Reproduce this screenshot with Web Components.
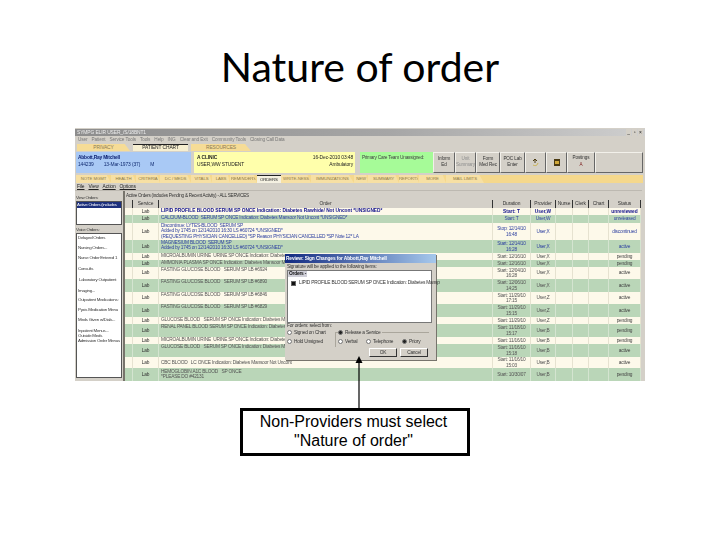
<!DOCTYPE html>
<html>
<head>
<meta charset="utf-8">
<title>Nature of order</title>
<style>
  html, body { margin: 0; background: #fff; }
</style>
</head>
<body>
<slide-page>
  <span slot="title">Nature of order</span>
  <ehr-window slot="shot">
    <left-panel slot="left"></left-panel>
    <orders-table slot="table"></orders-table>
    <review-dialog slot="dialog"></review-dialog>
  </ehr-window>
  <span slot="note">Non-Providers must select<br>"Nature of order"</span>
</slide-page>

<script>
const ROWS = [
  { h: 7, kind: "new", order: ["LIPID PROFILE BLOOD SERUM SP ONCE Indication: Diabetes Rawhide/ Not Uncont *UNSIGNED*"], dur: "Start: T", prov: "User,W", status: "unreviewed" },
  { h: 8, kind: "blue", order: ["CALCIUM-BLOOD  SERUM SP ONCE Indication: Diabetes Mansoor Not Uncont *UNSIGNED*"], dur: "Start: T", prov: "User,W", status: "unreleased" },
  { h: 17, kind: "blue", order: ["Discontinue: LYTES-BLOOD  SERUM SP", "Added by 1745 on 12/14/2010 16:30 LS #60724 *UNSIGNED*", "(REQUESTING PHYSICIAN CANCELLED) *SP Reason PHYSICIAN CANCELLED *SP Note 12* LA"], dur: "Stop: 12/14/10 16:48", prov: "User,X", status: "discontinued" },
  { h: 13, kind: "blue", order: ["MAGNESIUM BLOOD  SERUM SP", "Added by 1745 on 12/14/2010 16:30 LS #60724 *UNSIGNED*"], dur: "Start: 12/14/10 16:28", prov: "User,X", status: "active" },
  { h: 7, order: ["MICROALBUMIN URINE  URINE SP ONCE Indication: Diabetes"], dur: "Start: 12/16/10", prov: "User,X", status: "pending" },
  { h: 7, order: ["AMMONIA PLASMA SP ONCE Indication: Diabetes Mansoor Me"], dur: "Start: 12/16/10", prov: "User,X", status: "pending" },
  { h: 12, order: ["FASTING GLUCOSE BLOOD   SERUM SP LB #6924"], dur: "Start: 12/04/10 16:28", prov: "User,X", status: "active" },
  { h: 13, order: ["FASTING GLUCOSE BLOOD   SERUM SP LB #6890"], dur: "Start: 12/06/10 14:25", prov: "User,X", status: "active" },
  { h: 12, order: ["FASTING GLUCOSE BLOOD   SERUM SP LB #6846"], dur: "Start: 11/29/10 17:15", prov: "User,Z", status: "active" },
  { h: 13, order: ["FASTING GLUCOSE BLOOD   SERUM SP LB #6829"], dur: "Start: 11/29/10 15:15", prov: "User,Z", status: "active" },
  { h: 7, order: ["GLUCOSE BLOOD   SERUM SP ONCE Indication: Diabetes Mel"], dur: "Start: 11/29/10", prov: "User,Z", status: "pending" },
  { h: 13, order: ["RENAL PANEL BLOOD SERUM SP ONCE Indication: Diabetes"], dur: "Start: 11/18/10 15:17", prov: "User,B", status: "pending" },
  { h: 7, order: ["MICROALBUMIN URINE  URINE SP ONCE Indication: Diabetes"], dur: "Start: 11/16/10", prov: "User,B", status: "pending" },
  { h: 13, order: ["GLUCOSE BLOOD   SERUM SP ONCE Indication: Diabetes Man"], dur: "Start: 11/16/10 15:18", prov: "User,B", status: "active" },
  { h: 11, pad: 3, order: ["CBC BLOOD   LC ONCE Indication: Diabetes Mansoor Not Uncont"], dur: "Start: 11/16/10 15:03", prov: "User,B", status: "active" },
  { h: 13, pad: 1, order: ["HEMOGLOBIN A1C BLOOD   SP ONCE", "*PLEASE DO #42131"], dur: "Start: 10/30/07", prov: "User,B", status: "pending" }
];

const COLS = "8px 26px 334px 38px 25px 17px 16px 20px 32px";

function define(name, html) {
  customElements.define(name, class extends HTMLElement {
    constructor() {
      super();
      this.attachShadow({ mode: "open" }).innerHTML = html;
    }
  });
}

define("slide-page", `
  <style>
    :host { display: block; width: 720px; height: 540px; position: relative; overflow: hidden;
      font-family: "Liberation Sans", sans-serif; color: #000; }
    h1 { margin: 0; padding-top: 41px; height: 87px; text-align: center; font: 400 41px/52px Lato, sans-serif; }
    .shot { margin-left: 75px; width: 570px; }
    .note { box-sizing: border-box; margin: 27px 0 0 240px; width: 230px; height: 48px; border: 3px solid #000;
      text-align: center; font-size: 16px; line-height: 19px; padding: 1px 3px 0 0; }
    .arrow { position: absolute; left: 351px; top: 356px; }
  </style>
  <h1><slot name="title"></slot></h1>
  <div class="shot"><slot name="shot"></slot></div>
  <div class="note"><slot name="note"></slot></div>
  <svg class="arrow" width="16" height="52" viewBox="0 0 16 52">
    <path d="M8 6V52" stroke="#000" stroke-width="1.2" fill="none"/>
    <path d="M8 0L11.5 7H4.5Z" fill="#000"/>
  </svg>
`);

define("ehr-window", `
  <style>
    :host { display: block; position: relative; width: 570px; height: 253px; overflow: hidden; background: #d4d0c8;
      font: 4.9px/7px "Liberation Sans", sans-serif; letter-spacing: -.1px; color: #333; }
    .wrap { filter: blur(.3px); height: 100%; }
    .title { height: 7px; margin-top: 1px; background: linear-gradient(90deg, #8d8d8d, #a6a6a6 55%, #cfcfcf); color: #eee;
      display: flex; justify-content: space-between; padding: 0 2px; line-height: 7px; }
    .ctl { display: flex; gap: 1px; }
    .ctl i { font-style: normal; width: 5px; text-align: center; color: #222; background: #d4d0c8; }
    .menu { height: 8px; display: flex; gap: 4px; padding-left: 3px; line-height: 8px; color: #777; font-size: 4.7px; }
    .tabs { height: 8px; display: grid; grid-template-columns: 53px 55px 60px; gap: 3px; padding-left: 2px; line-height: 7px; }
    .tabs span { height: 7px; background: #f6dc96; color: #8b7b55; text-align: center; clip-path: polygon(0 0, 90% 0, 100% 100%, 0 100%); }
    .tabs b { font-weight: 400; height: 7px; color: #222; background: #f7efd0; border-top: 1px solid #222; box-sizing: border-box; text-align: center; line-height: 6px; }
    .banner { display: grid; grid-template-columns: 115px 164px 78px 22px 21px 24px 25px 21px 21px 28px 48px; height: 21px; padding-left: 1px; }
    .pt { background: #a9c9f5; color: #102a70; padding: 2px 1px 0 2px; }
    .pt b { display: block; color: #0a1e70; letter-spacing: -.2px; }
    .pt span { display: flex; gap: 10px; }
    .cl { margin-left: 3px; background: #ffffab; color: #222; padding: 2px 2px 0 3px; display: flex; justify-content: space-between; }
    .cl b { display: block; }
    .cl div:last-child { text-align: right; }
    .tm { margin-left: 5px; background: #a6fb98; color: #444; padding: 2px; white-space: nowrap; letter-spacing: -.25px; font-size: 4.8px; }
    .bn { border: 1px solid; border-color: #f2f0ea #666 #666 #f2f0ea; text-align: center; padding-top: 3px; line-height: 6px; color: #333; min-width: 0; overflow: hidden; font-size: 4.6px; white-space: nowrap; }
    .bn.off { color: #8d8d8d; }
    .bn svg { display: block; margin: 2px auto 0; }
    .sub { margin: 2px 2px 0 1px; height: 8px; background: #f5d88c; display: grid;
      grid-template-columns: 35px 25px 24px 31px 21px 18px 27px 24px 30px 43px 14px 31px 20px 27px 38px; line-height: 8px; color: #8d7a48; font-size: 4.3px; }
    .sub span { text-align: center; clip-path: polygon(0 0, 88% 0, 100% 100%, 0 100%); background: #f7e0a4; white-space: nowrap; }
    .sub b { font-weight: 400; text-align: center; background: #f5f1e2; color: #222; border-top: 1px solid #222; box-sizing: border-box; line-height: 7px; }
    .omenu { height: 8px; display: flex; gap: 4px; padding-left: 2px; color: #222; line-height: 7px; border-bottom: 1px solid #bdb9b1; box-sizing: border-box; text-decoration: underline; margin-right: 3px; }
    .body { display: flex; }
  </style>
  <div class="wrap">
    <div class="title"><span>SYMPG ELIR USER_/S/18BNT1</span><span class="ctl"><i>_</i><i>▫</i><i>×</i></span></div>
    <div class="menu"><span>User</span><span>Patient</span><span>Service Tools</span><span>Tools</span><span>Help</span><span>ING</span><span>Clear and Exit</span><span>Community Tools</span><span>Closing Call Data</span></div>
    <div class="tabs"><span>PRIVACY</span><b>PATIENT CHART</b><span>RESOURCES</span></div>
    <div class="banner">
      <div class="pt"><b>Abbott,Ray Mitchell</b><span><span>144239</span><span>13-Mar-1973 (37)</span><span>M</span></span></div>
      <div class="cl"><div><b>A CLINIC</b>USER,WW STUDENT</div><div>16-Dec-2010 03:48<br>Ambulatory</div></div>
      <div class="tm">Primary Care Team Unassigned:</div>
      <div class="bn">Inform<br>Ed</div>
      <div class="bn off">Unit<br>Summary</div>
      <div class="bn">Form<br>Med Rec</div>
      <div class="bn">POC Lab<br>Enter</div>
      <div class="bn"><svg width="9" height="9" viewBox="0 0 9 9"><path d="M2 3L4 1L6 3M4 1V5" stroke="#4a3a10" fill="none"/><path d="M2 7c2 1 4 1 5-2" stroke="#c9b04a" fill="none"/></svg></div>
      <div class="bn"><svg width="8" height="9" viewBox="0 0 8 9"><rect x="1" y="1" width="6" height="7" fill="#4b3a12"/><rect x="2" y="3" width="4" height="3" fill="#d0a83a"/></svg></div>
      <div class="bn" style="padding-top:1px;line-height:7px">Postings<br><span style="color:#7a1a1a">A</span></div>
      <div class="bn"></div>
    </div>
    <div class="sub"><span>NOTE MGMT</span><span>HEALTH</span><span>CRITERIA</span><span>DC / MEDS</span><span>VITALS</span><span>LABS</span><span>REMINDERS</span><b>ORDERS</b><span>WRITE-NESS</span><span>IMMUNIZATIONS</span><span>NEW</span><span>SUMMARY</span><span>REPORTS</span><span>MORE</span><span>MAIL LIMITS</span></div>
    <div class="omenu"><span>File</span><span>View</span><span>Action</span><span>Options</span></div>
    <div class="body"><slot name="left"></slot><slot name="table"></slot></div>
  </div>
  <slot name="dialog"></slot>
`);

define("left-panel", `
  <style>
    :host { display: block; width: 48px; color: #333; font-size: 4.4px; letter-spacing: -.25px; flex: none; }
    .lab { height: 10px; line-height: 5px; padding: 4px 0 0 1px; box-sizing: border-box; }
    .sel { margin-left: 1px; width: 46px; height: 24px; background: #fff; border: 1px solid #555; box-sizing: border-box; }
    .sel div { background: #1c2f7d; color: #fff; white-space: nowrap; line-height: 6px; }
    .list { margin-left: 1px; width: 46px; height: 145px; background: #fff; border: 1px solid #555; box-sizing: border-box; padding-top: 1px; line-height: 5px; }
    .list div { white-space: nowrap; padding-left: 1px; }
  </style>
  <div class="lab">View Orders:</div>
  <div class="sel"><div>Active Orders (includes</div></div>
  <div class="lab" style="height:8px;padding-top:2px">Voice Orders:</div>
  <div class="list">
    <div style="height:10px">Delayed Orders</div>
    <div style="height:10px">Nursing Orders...</div>
    <div style="height:11px">Nurse Order Entered 1</div>
    <div style="height:11px">Consults</div>
    <div style="height:11px">&nbsp;Laboratory Outpatient</div>
    <div style="height:9px">Imaging...</div>
    <div style="height:10px">Outpatient Medications:</div>
    <div style="height:10px">Pyxis Medication Menu</div>
    <div style="height:11px">Meds Given w/Dials...</div>
    <div style="height:5px">Inpatient Menus...</div>
    <div style="height:5px">Outside Meds</div>
    <div>Admission Order Menus</div>
  </div>
`);

class OrdersTable extends HTMLElement {
  constructor() {
    super();
    const root = this.attachShadow({ mode: "open" });
    const rows = ROWS.map((r, i) => {
      const cls = (i % 2 ? "g " : "c ") + (r.kind || "");
      return `<div class="row ${cls}" style="height:${r.h}px">
        <div></div><div class="sv">Lab</div>
        <div class="or" style="padding-top:${r.pad || 0}px">${r.order.map(t => `<div>${t}</div>`).join("")}</div>
        <div class="mid">${r.dur}</div><div class="mid">${r.prov}</div><div></div><div></div><div></div>
        <div class="mid st">${r.status}</div>
      </div>`;
    }).join("");
    root.innerHTML = `
      <style>
        :host { display: block; width: 516px; color: #555; border-left: 2px solid #77746c; flex: none; }
        .cap { height: 9px; line-height: 7px; padding: 1px 0 0 1px; box-sizing: border-box; color: #333; font-size: 4.6px; letter-spacing: -.25px; }
        .row, .hd { display: grid; grid-template-columns: ${COLS}; }
        .hd { height: 8px; line-height: 7px; text-align: center; color: #333; }
        .hd div { border-right: 1px solid #333; box-sizing: border-box; }
        .row { font-size: 4.8px; line-height: 5.4px; letter-spacing: -.2px; overflow: hidden; }
        .row.c { background: #fdf9ea; }
        .row.g { background: #bad6b8; }
        .row > div { border-right: 1px solid #e6e2d0; box-sizing: border-box; overflow: hidden; }
        .row.g > div { border-right-color: #d4e4d0; }
        .sv, .mid { text-align: center; display: flex; align-items: center; justify-content: center; }
        .sv { color: #333; }
        .or { white-space: pre; padding-left: 2px; display: block; }
        .new .or, .new .mid { color: #10108c; font-weight: 700; letter-spacing: 0; }
        .blue .or, .blue .mid { color: #2c3fa0; }
        .st { color: #444; }
      </style>
      <div class="cap">Active Orders (includes Pending &amp; Recent Activity) - ALL SERVICES</div>
      <div class="hd"><div></div><div>Service</div><div>Order</div><div>Duration</div><div>Provider</div><div>Nurse</div><div>Clerk</div><div>Chart</div><div>Status</div></div>
      ${rows}`;
  }
}
customElements.define("orders-table", OrdersTable);

define("review-dialog", `
  <style>
    :host { display: block; position: absolute; left: 210px; top: 126px; width: 151px; height: 106px; background: #d4d0c8;
      box-shadow: 1px 1px 0 #77746c; font-size: 4.8px; letter-spacing: -.2px; line-height: 6px; color: #333; filter: blur(.3px); }
    .t { height: 9px; line-height: 9px; padding-left: 1px; background: linear-gradient(90deg, #122a80, #a6c8ec); color: #fff; font-weight: 700; letter-spacing: -.1px; white-space: nowrap; }
    .l { padding-left: 2px; height: 7px; line-height: 7px; }
    .box { margin: 0 4px 0 2px; height: 53px; background: #fff; border: 1px solid #777; box-sizing: border-box; white-space: nowrap; }
    .box b { display: inline-block; background: #cfcfd8; padding: 0 1px; color: #111; }
    .box div { padding: 3px 0 0 3px; display: flex; align-items: center; gap: 3px; }
    .box i { width: 3px; height: 3px; background: #111; border: 1px solid #666; flex: none; }
    .low { display: grid; grid-template-columns: 48px 94px; padding-left: 2px; }
    .r { display: flex; align-items: center; gap: 2px; height: 7px; white-space: nowrap; }
    .r + .r { margin-top: 2px; }
    .r i { width: 3px; height: 3px; border-radius: 50%; background: #fff; border: 1px solid #777; flex: none; }
    .r i.on { background: #222; }
    .grp { margin-top: 3px; border-top: 1px solid #aaa69c; border-left: 1px solid #aaa69c; height: 14px; padding-left: 2px; }
    .grp > .r { margin-top: -4px; width: max-content; background: #d4d0c8; padding-right: 1px; }
    .grp .opts { display: grid; grid-template-columns: 28px 36px auto; margin-top: 2px; }
    .grp .opts .r { margin: 0; }
    .btns { position: absolute; right: 8px; bottom: 3px; display: flex; gap: 3px; }
    .btns span { width: 28px; height: 9px; line-height: 8px; text-align: center; box-sizing: border-box; border: 1px solid; border-color: #fff #333 #333 #fff; }
  </style>
  <div class="t">Review: Sign Changes for Abbott,Ray Mitchell</div>
  <div class="l">Signature will be applied to the following items:</div>
  <div class="box"><b>Orders -</b><div><i></i>LIPID PROFILE BLOOD SERUM SP ONCE Indication: Diabetes Mansp</div></div>
  <div class="l" style="height:6px;line-height:6px">For orders: select from:</div>
  <div class="low">
    <div><div class="r"><i></i>Signed on Chart</div><div class="r"><i></i>Hold Unsigned</div></div>
    <div class="grp"><div class="r"><i class="on"></i>Release a Service</div>
      <div class="opts"><div class="r"><i></i>Verbal</div><div class="r"><i></i>Telephone</div><div class="r"><i class="on"></i>Priory</div></div>
    </div>
  </div>
  <div class="btns"><span>OK</span><span>Cancel</span></div>
`);
</script>
</body>
</html>
